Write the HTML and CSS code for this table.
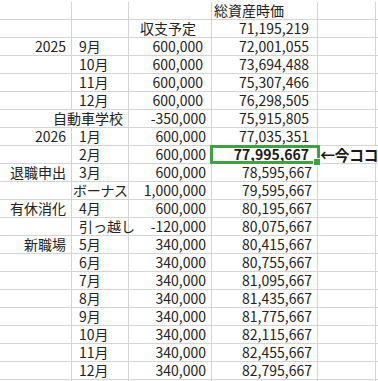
FILE: index.html
```html
<!DOCTYPE html>
<html lang="ja">
<head>
<meta charset="utf-8">
<link rel="stylesheet" href="styles.css">
</head>
<body>
<div class="sheet">
  <div class="c"></div><div class="c"></div><div class="c"></div><div class="c l">総資産時価</div><div class="c"></div><div class="c f"></div>
  <div class="c"></div><div class="c"></div><div class="c m">収支予定</div><div class="c r">71,195,219</div><div class="c"></div><div class="c f"></div>
  <div class="c r">2025</div><div class="c mo">9月</div><div class="c r">600,000</div><div class="c r">72,001,055</div><div class="c"></div><div class="c f"></div>
  <div class="c"></div><div class="c mo">10月</div><div class="c r">600,000</div><div class="c r">73,694,488</div><div class="c"></div><div class="c f"></div>
  <div class="c"></div><div class="c mo">11月</div><div class="c r">600,000</div><div class="c r">75,307,466</div><div class="c"></div><div class="c f"></div>
  <div class="c"></div><div class="c mo">12月</div><div class="c r">600,000</div><div class="c r">76,298,505</div><div class="c"></div><div class="c f"></div>
  <div class="c r span2">自動車学校</div><div class="c r">-350,000</div><div class="c r">75,915,805</div><div class="c"></div><div class="c f"></div>
  <div class="c r">2026</div><div class="c mo">1月</div><div class="c r">600,000</div><div class="c r">77,035,351</div><div class="c"></div><div class="c f"></div>
  <div class="c"></div><div class="c mo">2月</div><div class="c r">600,000</div><div class="c r b sel">77,995,667<span class="selbox"></span><span class="handle"></span></div><div class="c note span2">←今ココ</div>
  <div class="c r">退職申出</div><div class="c mo">3月</div><div class="c r">600,000</div><div class="c r">78,595,667</div><div class="c"></div><div class="c f"></div>
  <div class="c"></div><div class="c lb">ボーナス</div><div class="c r">1,000,000</div><div class="c r">79,595,667</div><div class="c"></div><div class="c f"></div>
  <div class="c r">有休消化</div><div class="c mo">4月</div><div class="c r">600,000</div><div class="c r">80,195,667</div><div class="c"></div><div class="c f"></div>
  <div class="c"></div><div class="c mo">引っ越し</div><div class="c r">-120,000</div><div class="c r">80,075,667</div><div class="c"></div><div class="c f"></div>
  <div class="c r">新職場</div><div class="c mo">5月</div><div class="c r">340,000</div><div class="c r">80,415,667</div><div class="c"></div><div class="c f"></div>
  <div class="c"></div><div class="c mo">6月</div><div class="c r">340,000</div><div class="c r">80,755,667</div><div class="c"></div><div class="c f"></div>
  <div class="c"></div><div class="c mo">7月</div><div class="c r">340,000</div><div class="c r">81,095,667</div><div class="c"></div><div class="c f"></div>
  <div class="c"></div><div class="c mo">8月</div><div class="c r">340,000</div><div class="c r">81,435,667</div><div class="c"></div><div class="c f"></div>
  <div class="c"></div><div class="c mo">9月</div><div class="c r">340,000</div><div class="c r">81,775,667</div><div class="c"></div><div class="c f"></div>
  <div class="c"></div><div class="c mo">10月</div><div class="c r">340,000</div><div class="c r">82,115,667</div><div class="c"></div><div class="c f"></div>
  <div class="c"></div><div class="c mo">11月</div><div class="c r">340,000</div><div class="c r">82,455,667</div><div class="c"></div><div class="c f"></div>
  <div class="c"></div><div class="c mo">12月</div><div class="c r">340,000</div><div class="c r">82,795,667</div><div class="c"></div><div class="c f"></div>
  <div class="c"></div><div class="c"></div><div class="c"></div><div class="c"></div><div class="c"></div><div class="c f"></div>
</div>
</body>
</html>
```
FILE: styles.css
```css
html, body {
  margin: 0;
  padding: 0;
  background: #ffffff;
  overflow: hidden;
}
body {
  width: 378px;
  height: 381px;
}
.sheet {
  margin-top: 2px;
  display: grid;
  grid-template-columns: 72px 57px 83px 106px 58px 1fr;
  grid-auto-rows: 18px;
  font-family: "Noto Sans CJK JP", "Noto Sans", sans-serif;
  font-size: 14px;
  color: #222222;
}
.c {
  box-sizing: border-box;
  border-right: 1px solid #d4d4d4;
  border-bottom: 1px solid #d4d4d4;
  line-height: 17px;
  white-space: nowrap;
  overflow: visible;
  padding: 0 2px;
}
.f {
  border-right: none;
}
.r {
  text-align: right;
  padding-right: 5px;
}
.c.r:nth-child(6n+3),
.c.r:nth-child(6n+4) {
  padding-right: 8px;
}
.l {
  text-align: left;
  padding-left: 2px;
}
.m {
  text-align: center;
  padding-right: 6px;
}
.mo {
  padding-left: 7px;
}
.lb {
  padding-left: 1px;
  letter-spacing: -0.3px;
}
.span2 {
  grid-column: span 2;
}
.b {
  font-weight: 700;
  color: #1a1a1a;
  padding-right: 9px;
}
.sel {
  position: relative;
}
.selbox {
  position: absolute;
  left: -2px;
  top: -1px;
  width: 110px;
  height: 19px;
  box-sizing: border-box;
  border: 3px solid #3fa144;
}
.handle {
  position: absolute;
  left: 102px;
  top: 13px;
  width: 6px;
  height: 6px;
  background: #3fa144;
  outline: 1px solid #ffffff;
}
.note {
  font-weight: 700;
  font-size: 15px;
  padding-left: 2px;
  border-right: none;
  color: #1a1a1a;
  letter-spacing: -0.5px;
}
```
